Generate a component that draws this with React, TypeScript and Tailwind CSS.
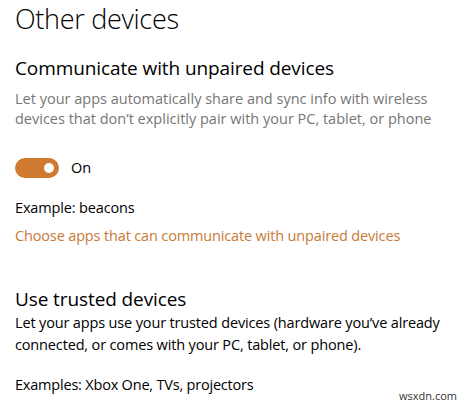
export default function App() {
  return (
    <div
      className="relative w-[468px] h-[407px] overflow-hidden bg-white pl-[15px] text-black"
      style={{ fontFamily: '"Open Sans", "Noto Sans", sans-serif' }}
    >
      <h1 className="pt-[2px] text-[27px] font-light leading-[34px] tracking-[-0.3px]">Other devices</h1>

      <h2 className="mt-[19px] text-[19px] font-normal leading-[26px] tracking-[-0.1px]">Communicate with unpaired devices</h2>
      <p className="mt-[8px] w-[440px] text-[14.5px] leading-[20px] text-[#767676]">
        Let your apps automatically share and sync info with wireless devices that don’t explicitly pair with your PC, tablet, or phone
      </p>

      <div className="mt-[29px] flex items-center gap-[12px]">
        <div className="flex h-[20px] w-[44px] items-center justify-end rounded-full bg-[#cf7a30] pr-[5px]">
          <div className="h-[10px] w-[10px] rounded-full bg-white" />
        </div>
        <span className="text-[14.5px] leading-[20px]">On</span>
      </div>

      <p className="mt-[20px] text-[14.5px] leading-[20px] tracking-[-0.15px]">Example: beacons</p>
      <p className="mt-[8px] text-[14.5px] leading-[20px] tracking-[-0.15px] text-[#c97a36]">Choose apps that can communicate with unpaired devices</p>

      <h2 className="mt-[40px] text-[19px] font-normal leading-[26px] tracking-[-0.1px]">Use trusted devices</h2>
      <p className="w-[448px] text-[14.5px] leading-[22px] tracking-[-0.15px]">
        Let your apps use your trusted devices (hardware you’ve already connected, or comes with your PC, tablet, or phone).
      </p>

      <p className="mt-[19px] text-[14.5px] leading-[20px] tracking-[-0.2px]">Examples: Xbox One, TVs, projectors</p>

      <span className="absolute bottom-[4px] right-[11px] text-[11px] leading-[14px] text-[#333]">wsxdn.com</span>
    </div>
  );
}
